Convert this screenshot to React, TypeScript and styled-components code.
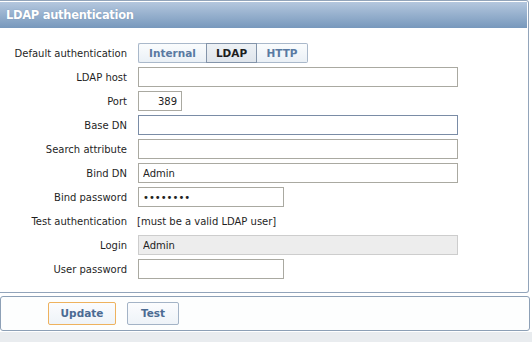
import styled, { createGlobalStyle } from "styled-components";

const GlobalStyle = createGlobalStyle`
  html, body {
    margin: 0;
    padding: 0;
    background: #ffffff;
  }
  body {
    font-family: "DejaVu Sans", Verdana, sans-serif;
    font-size: 10px;
    color: #222;
  }
`;

const Page = styled.div`
  width: 532px;
  height: 342px;
  display: flex;
  flex-direction: column;
  overflow: hidden;
`;

const FormPanel = styled.div`
  width: 529px;
  box-sizing: border-box;
  border: 1px solid #92a4ba;
  border-left: none;
  border-radius: 0 3px 3px 0;
  padding: 1px 1px 13px 0;
  background: #fff;
`;

const Header = styled.div`
  height: 26px;
  display: flex;
  align-items: center;
  padding-left: 6px;
  background: linear-gradient(#b4c7de, #7798bc);
  color: #fff;
  font-weight: bold;
  font-size: 11.5px;
  letter-spacing: -0.3px;
  text-shadow: 0 0 1px rgba(60, 90, 130, 0.4);
`;

const FormGrid = styled.div`
  margin-top: 15px;
  display: grid;
  grid-template-columns: 127px 1fr;
  grid-auto-rows: 20px;
  column-gap: 11px;
  row-gap: 4px;
  align-items: center;
`;

const Label = styled.div`
  text-align: right;
  white-space: nowrap;
  color: #1f1f1f;
`;

const Field = styled.div`
  display: flex;
  align-items: center;
`;

const TextInput = styled.input<{ $w: number; $focus?: boolean; $right?: boolean }>`
  box-sizing: border-box;
  width: ${(p) => p.$w}px;
  height: 20px;
  margin: 0;
  padding: 0 4px;
  border: 1px solid ${(p) => (p.$focus ? "#7a8ca6" : "#aaa9a1")};
  background: #fff;
  font-family: "DejaVu Sans", Verdana, sans-serif;
  font-size: 10px;
  color: #222;
  text-align: ${(p) => (p.$right ? "right" : "left")};
  outline: none;
  &:read-only.disabled {
    background: #ededed;
    border-color: #cdcdcd;
  }
`;

const Tabs = styled.div`
  display: inline-flex;
  height: 20px;
`;

const Tab = styled.div<{ $w: number; $active?: boolean; $first?: boolean; $last?: boolean }>`
  box-sizing: border-box;
  width: ${(p) => p.$w}px;
  height: 20px;
  display: flex;
  align-items: center;
  justify-content: center;
  font-weight: bold;
  font-size: 10.5px;
  border: 1px solid ${(p) => (p.$active ? "#8394aa" : "#a9b8ca")};
  border-left-width: ${(p) => (p.$first || p.$active ? 1 : 0)}px;
  border-right-width: ${(p) => (p.$last || p.$active ? 1 : 0)}px;
  border-radius: ${(p) => (p.$first ? "2px 0 0 2px" : p.$last ? "0 2px 2px 0" : "0")};
  background: ${(p) =>
    p.$active ? "linear-gradient(#edf1f5, #dfe5ec)" : "linear-gradient(#fafcfd, #eaf0f6)"};
  color: ${(p) => (p.$active ? "#1d1d1d" : "#5a7aa2")};
`;

const Note = styled.div`
  margin-left: -1px;
  color: #1f1f1f;
`;

const FooterPanel = styled.div`
  margin-top: 3px;
  width: 530px;
  height: 35px;
  box-sizing: border-box;
  border: 1px solid #8da0b6;
  border-radius: 3px;
  background: #fdfefe;
  display: flex;
  align-items: center;
  gap: 11px;
  padding: 0 0 1px 47px;
`;

const Button = styled.button<{ $w: number; $primary?: boolean }>`
  box-sizing: border-box;
  width: ${(p) => p.$w}px;
  height: 23px;
  margin: 0;
  padding: 0;
  border: 1px solid ${(p) => (p.$primary ? "#eeb25e" : "#a3b3c6")};
  border-radius: 2px;
  background: linear-gradient(#fbfcfe, #eef3f8);
  color: #4b6b93;
  font-family: "DejaVu Sans", Verdana, sans-serif;
  font-weight: bold;
  font-size: 10.5px;
`;

const BottomStrip = styled.div`
  flex: 1;
  margin-top: 1px;
  background: #e9ecef;
`;

export default function App() {
  return (
    <Page>
      <GlobalStyle />
      <FormPanel>
        <Header>LDAP authentication</Header>
        <FormGrid>
          <Label>Default authentication</Label>
          <Field>
            <Tabs>
              <Tab $w={68} $first>Internal</Tab>
              <Tab $w={51} $active>LDAP</Tab>
              <Tab $w={51} $last>HTTP</Tab>
            </Tabs>
          </Field>

          <Label>LDAP host</Label>
          <Field>
            <TextInput $w={320} defaultValue="" />
          </Field>

          <Label>Port</Label>
          <Field>
            <TextInput $w={44} $right defaultValue="389" />
          </Field>

          <Label>Base DN</Label>
          <Field>
            <TextInput $w={320} $focus defaultValue="" />
          </Field>

          <Label>Search attribute</Label>
          <Field>
            <TextInput $w={320} defaultValue="" />
          </Field>

          <Label>Bind DN</Label>
          <Field>
            <TextInput $w={320} defaultValue="Admin" />
          </Field>

          <Label>Bind password</Label>
          <Field>
            <TextInput $w={146} type="password" defaultValue="password" />
          </Field>

          <Label>Test authentication</Label>
          <Note>[must be a valid LDAP user]</Note>

          <Label>Login</Label>
          <Field>
            <TextInput $w={320} className="disabled" readOnly defaultValue="Admin" />
          </Field>

          <Label>User password</Label>
          <Field>
            <TextInput $w={146} type="password" defaultValue="" />
          </Field>
        </FormGrid>
      </FormPanel>
      <FooterPanel>
        <Button $w={68} $primary>Update</Button>
        <Button $w={52}>Test</Button>
      </FooterPanel>
      <BottomStrip />
    </Page>
  );
}
